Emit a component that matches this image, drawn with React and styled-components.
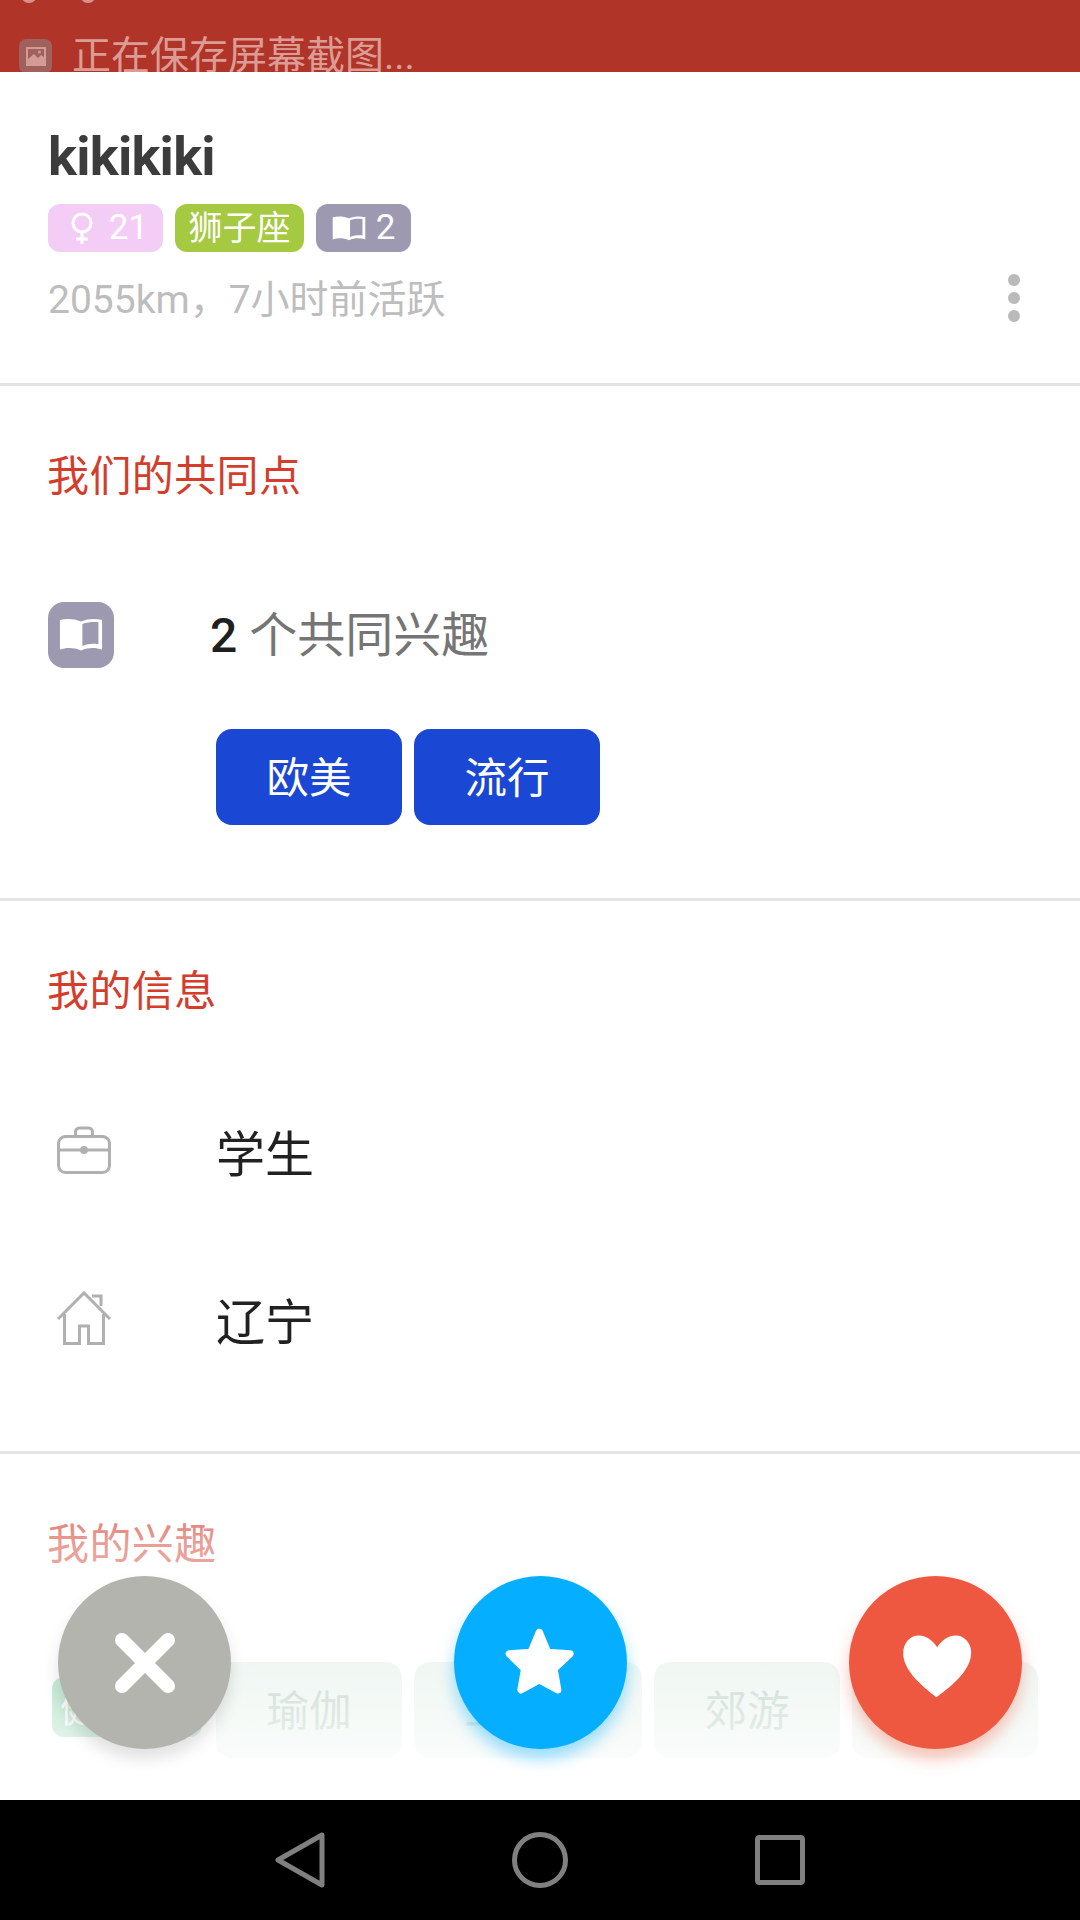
import React from "react";
import styled, { createGlobalStyle } from "styled-components";

const Global = createGlobalStyle`
  html, body { margin: 0; padding: 0; background: #fff; }
  * { box-sizing: border-box; }
  body { font-family: Roboto, "Noto Sans CJK SC", sans-serif; }
`;
const Page = styled.div`
  width: 1080px; height: 1920px; display: flex; flex-direction: column; overflow: hidden; background: #fff; position: relative;
`;
const StatusBar = styled.div`
  height: 72px; flex: none; background: #b03428; overflow: hidden; display: flex; flex-direction: column; padding-left: 19px;
`;
const StatusIcons = styled.div`
  height: 4px; flex: none; display: flex; gap: 43px; overflow: hidden; align-items: flex-end; margin-left: 2px;
`;
const StatusDot = styled.span`
  width: 16px; height: 16px; flex: none; border-radius: 50%; border: 3px solid #d9928b; margin-bottom: 1px;
`;
const Ticker = styled.div`
  display: flex; align-items: flex-start; gap: 20px; margin-top: 35px; flex: none;
`;
const TickerIcon = styled.div`
  width: 33px; height: 34px; flex: none; border-radius: 7px; background: #a0605c; display: flex; align-items: center; justify-content: center;
`;
const TickerText = styled.div`
  font-size: 39px; line-height: 42px; color: #dc9c96; margin-top: -4px; white-space: nowrap;
`;
const Content = styled.div`
  flex: 1; position: relative; overflow: hidden;
`;
const Section = styled.section`
  border-bottom: ${p => (p.$last ? "0" : "3px solid #e4e4e4")}; padding: 0 48px; height: ${p => p.$h}px; flex: none; display: flex; flex-direction: column;
`;
const Name = styled.h1`
  margin: 57px 0 0; font-size: 54px; line-height: 56px; font-weight: 700; color: #3c3c3c; letter-spacing: -0.7px;
`;
const Tags = styled.div`
  display: flex; gap: 12px; margin-top: 19px;
`;
const Tag = styled.div`
  height: 48px; width: ${p => p.$w}px; padding-left: ${p => p.$pad || 0}px; border-radius: 12px; background: ${p => p.$bg}; color: #fff; font-size: ${p => p.$font}px; line-height: 48px;
  display: flex; align-items: center; justify-content: center; gap: ${p => p.$gap || 0}px; white-space: nowrap;
`;
const MetaRow = styled.div`
  display: flex; justify-content: space-between; align-items: center; margin-top: 22px; height: 48px;
`;
const Meta = styled.div`
  font-size: 39px; line-height: 48px; color: #bdbdbd; margin-top: 4px;
`;
const Dots = styled.div`
  display: flex; flex-direction: column; gap: 6px; margin-right: 12px;
`;
const Dot = styled.span`
  width: 12px; height: 12px; border-radius: 50%; background: #bababa;
`;
const Title = styled.h2`
  margin: 66px 0 0 -1px; font-size: 42px; line-height: 50px; font-weight: 400; color: #d43d2c; letter-spacing: 0.4px;
`;
const CommonRow = styled.div`
  display: flex; align-items: center; margin-top: 100px; gap: 96px; height: 66px;
`;
const IconTile = styled.div`
  width: 66px; height: 66px; border-radius: 16px; background: #9c99b1; display: flex; align-items: center; justify-content: center; flex: none;
`;
const CommonText = styled.div`
  font-size: 48px; line-height: 66px; color: #757575; padding-top: 2px;
  b { font-weight: 500; color: #1f1f1f; }
`;
const Chips = styled.div`
  display: flex; gap: 12px; margin-left: 168px; margin-top: ${p => p.$top}px;
`;
const Chip = styled.div`
  width: ${p => p.$w || 186}px; height: 96px; flex: none; border-radius: 16px; background: ${p => p.$bg || "#1a47d3"}; color: ${p => p.$color || "#fff"};
  font-size: 42.5px; padding-bottom: 5px; display: flex; align-items: center; justify-content: center;
`;
const InfoRow = styled.div`
  display: flex; align-items: center; height: 66px; margin-top: ${p => p.$top}px;
`;
const InfoIcon = styled.div`
  width: 168px; flex: none; padding-left: 9px; display: flex;
`;
const InfoText = styled.div`
  font-size: 49px; color: #212121;
`;
const TagMini = styled.div`
  position: absolute; left: 52px; top: 1605px; width: 150px; height: 60px; border-radius: 12px; background: #3dbb78; color: #fff; font-size: 36px;
  display: flex; align-items: center; padding-left: 8px;
`;
const Fade = styled.div`
  position: absolute; left: 0; right: 0; top: 1383px; height: 345px; pointer-events: none;
  background: linear-gradient(to bottom, rgba(255,255,255,0) 0%, rgba(255,255,255,.5) 26%, rgba(255,255,255,.7) 65%, rgba(255,255,255,.88) 88%, #fff 100%);
`;
const Actions = styled.div`
  position: absolute; left: 58px; right: 58px; top: 1504px; display: flex; justify-content: space-between;
`;
const Fab = styled.button`
  width: 173px; height: 173px; border-radius: 50%; border: 0; padding: 0; background: ${p => p.$bg};
  box-shadow: 0 10px 16px ${p => p.$shadow}; display: flex; align-items: center; justify-content: center;
`;
const NavBar = styled.nav`
  height: 120px; flex: none; background: #000; display: flex; align-items: center; justify-content: center;
`;
const NavSlot = styled.div`
  width: 240px; display: flex; justify-content: center;
`;

const Book = ({ size = 48, ratio = 0.8 }) => (
  <svg width={size} height={size * ratio} viewBox="0 0 48 40" preserveAspectRatio="none">
    <path fill="#fff" fillRule="evenodd" d="M1 3.500C8 1.500 16 1.500 24 5C32 1.500 40 1.500 47 3.500V37C40 34.500 32 34.500 24 38C16 34.500 8 34.500 1 37ZM25.500 8V33C31 30.500 37 30 43 31V6C37 5.500 31 6 25.500 8Z" />
  </svg>
);

const FadedChip = (props) => <Chip $bg="#d2e7db" $color="#6b9b81" {...props} />;

export default function App() {
  return (
    <Page>
      <Global />
      <StatusBar>
        <StatusIcons><StatusDot /><StatusDot /></StatusIcons>
        <Ticker>
          <TickerIcon>
            <svg width="20" height="20" viewBox="0 0 20 20"><path fill="#d49a96" d="M0 1h20v19H0z" /><path fill="#a0605c" d="M2 3h16v8l-3-2-3 3-4-4-6 5z" /><circle cx="13.500" cy="6" r="1.500" fill="#d49a96" /></svg>
          </TickerIcon>
          <TickerText>正在保存屏幕截图...</TickerText>
        </Ticker>
      </StatusBar>
      <Content>
        <Section $h={314}>
          <Name>kikikiki</Name>
          <Tags>
            <Tag $w={115} $bg="#f3cdf5" $gap={16} $font={35} $pad={8}>
              <svg width="22" height="32" viewBox="0 0 22 32" fill="none" stroke="#fff" strokeWidth="3"><circle cx="11" cy="11" r="9" /><path d="M11 20v12M5 27h12" /></svg>
              21
            </Tag>
            <Tag $w={129} $bg="#a5c940" $font={34}>狮子座</Tag>
            <Tag $w={95} $bg="#9c99b1" $gap={10} $font={35}><Book size={34} ratio={0.78} />2</Tag>
          </Tags>
          <MetaRow>
            <Meta>2055km，7小时前活跃</Meta>
            <Dots><Dot /><Dot /><Dot /></Dots>
          </MetaRow>
        </Section>
        <Section $h={515}>
          <Title>我们的共同点</Title>
          <CommonRow>
            <IconTile><Book size={44} /></IconTile>
            <CommonText><b>2</b> 个共同兴趣</CommonText>
          </CommonRow>
          <Chips $top={61}>
            <Chip>欧美</Chip>
            <Chip>流行</Chip>
          </Chips>
        </Section>
        <Section $h={553}>
          <Title>我的信息</Title>
          <InfoRow $top={100}>
            <InfoIcon>
              <svg width="54" height="48" viewBox="0 0 54 48" fill="none" stroke="#b0b0b0" strokeWidth="3"><rect x="1.500" y="10.500" width="51" height="36" rx="7" /><path d="M1.500 24h51M18.500 10V6a4 4 0 0 1 4-4h9a4 4 0 0 1 4 4v4" /><circle cx="27" cy="24" r="2.500" fill="#b0b0b0" /></svg>
            </InfoIcon>
            <InfoText>学生</InfoText>
          </InfoRow>
          <InfoRow $top={102}>
            <InfoIcon>
              <svg width="54" height="54" viewBox="0 0 54 54" fill="none" stroke="#b0b0b0" strokeWidth="3"><path d="M1 28L27 2l26 26M35 5h9v10M7.500 23v29.500h15V35h9v17.500h15V23" /></svg>
            </InfoIcon>
            <InfoText>辽宁</InfoText>
          </InfoRow>
        </Section>
        <Section $h={300} $last>
          <Title>我的兴趣</Title>
          <Chips $top={92}>
            <FadedChip>瑜伽</FadedChip>
            <FadedChip $w={228}>二次元</FadedChip>
            <FadedChip>郊游</FadedChip>
            <FadedChip>旅行</FadedChip>
          </Chips>
        </Section>
        <TagMini>健身</TagMini>
        <Fade />
        <Actions>
          <Fab $bg="#b4b4af" $shadow="rgba(0,0,0,.12)">
            <svg width="62" height="62" viewBox="0 0 62 62"><path stroke="#fff" strokeWidth="14" strokeLinecap="round" d="M8 8l46 46M54 8L8 54" /></svg>
          </Fab>
          <Fab $bg="#05aeff" $shadow="rgba(5,174,255,.4)">
            <svg width="120" height="120" viewBox="3 7.500 360 360"><path fill="#fff" stroke="#fff" strokeWidth="22" strokeLinejoin="round" d="M181 96L206 156 273 160 225 205 236 268 181 238 126 268 137 205 91 160 156 156Z" /></svg>
          </Fab>
          <Fab $bg="#ee5840" $shadow="rgba(238,88,64,.35)">
            <svg width="120" height="120" viewBox="-13.500 7.500 360 360"><path fill="#fff" d="M170 140C155 118 135 105 115 105C88 105 68 128 68 158C68 205 115 250 168 290C225 248 272 205 272 155C272 128 252 105 225 105C205 105 185 118 170 140Z" /></svg>
          </Fab>
        </Actions>
      </Content>
      <NavBar>
        <NavSlot>
          <svg width="52" height="56" viewBox="0 0 52 56" fill="none" stroke="#808080" strokeWidth="5" strokeLinejoin="round"><path d="M48 3L4 28l44 25z" /></svg>
        </NavSlot>
        <NavSlot>
          <svg width="56" height="56" viewBox="0 0 56 56" fill="none" stroke="#808080" strokeWidth="5"><circle cx="28" cy="28" r="25.500" /></svg>
        </NavSlot>
        <NavSlot>
          <svg width="50" height="50" viewBox="0 0 50 50" fill="none" stroke="#808080" strokeWidth="5" strokeLinejoin="round"><rect x="2.500" y="2.500" width="45" height="45" rx="2" /></svg>
        </NavSlot>
      </NavBar>
    </Page>
  );
}
